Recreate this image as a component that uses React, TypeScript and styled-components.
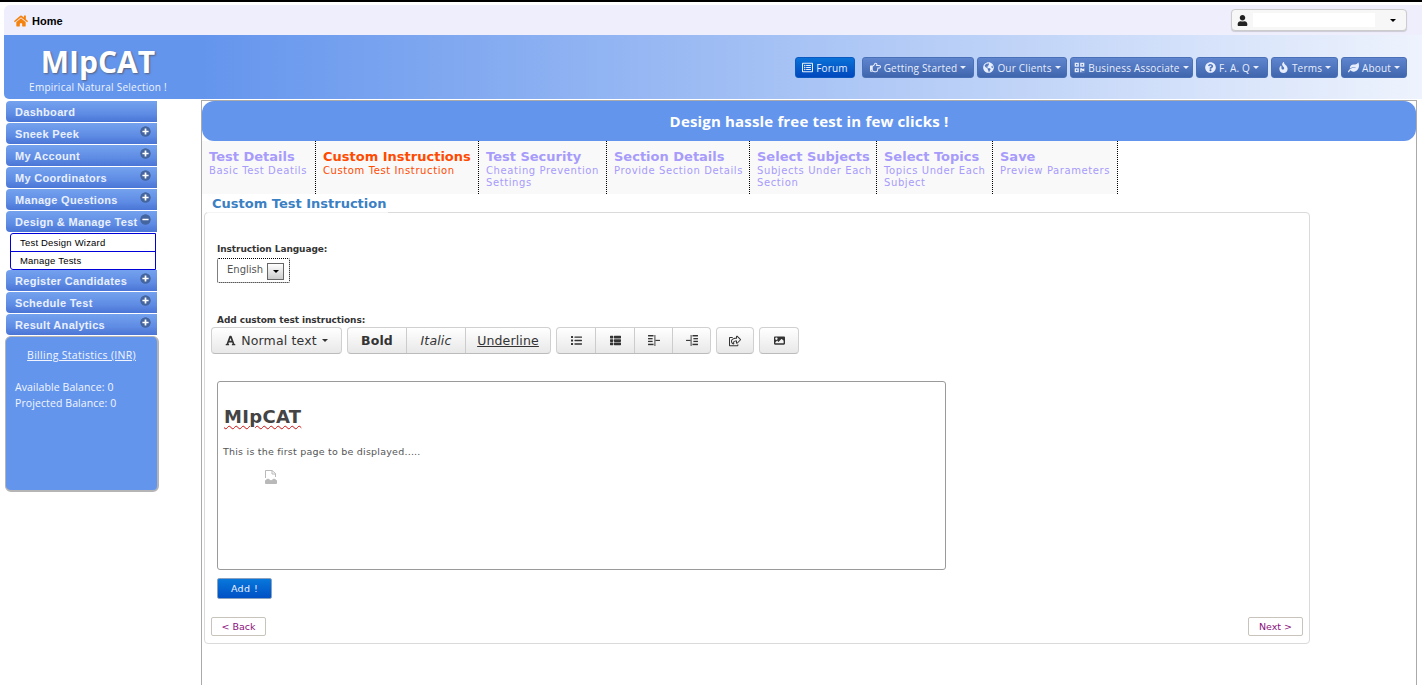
import React from 'react';
import styled, { createGlobalStyle, css } from 'styled-components';
import {
  FaHome, FaUser, FaRegListAlt, FaRegHandPointRight, FaGlobeAmericas, FaQrcode,
  FaQuestionCircle, FaFire, FaLeaf, FaFont, FaList, FaThList, FaRegShareSquare, FaImage,
  FaPlusCircle, FaMinusCircle,
} from 'react-icons/fa';

const GlobalStyle = createGlobalStyle`
  html, body { margin: 0; padding: 0; height: 100%; overflow: hidden; background: #fff; }
  body { font-family: "DejaVu Sans", Verdana, sans-serif; }
  * { box-sizing: border-box; }
`;

const TREBUCHET = `"Open Sans", "DejaVu Sans", sans-serif`;
const VERDANA = `"DejaVu Sans", Verdana, sans-serif`;

const Page = styled.div`
  height: 685px;
  border-top: 2px solid #000;
  overflow: hidden;
`;

// TOP BAR
const TopBar = styled.div`
  margin: 3px 0 0 4px;
  height: 30px;
  background: #eeeefc;
  border-top-left-radius: 6px;
  display: flex;
  align-items: center;
  justify-content: space-between;
  padding: 0 15px 0 10px;
`;

const HomeLink = styled.a`
  display: flex;
  align-items: center;
  gap: 4px;
  margin-top: 1px;
  font: bold 11px "Liberation Sans", Arial, sans-serif;
  color: #000;
  svg { color: #f5820d; }
`;

const UserSelect = styled.div`
  width: 176px;
  height: 22px;
  border: 1px solid #ccc;
  border-radius: 4px;
  background: #f7f7f7;
  box-shadow: 0 1px 1px rgba(0, 0, 0, 0.15);
  display: flex;
  align-items: center;
  padding-left: 5px;
  font-size: 12px;
  color: #222;
`;

const UserBlank = styled.div`
  width: 122px;
  height: 14px;
  margin-left: 5px;
  background: #fff;
  flex: none;
`;

const Caret = styled.span<{ $color?: string }>`
  display: inline-block;
  width: 0;
  height: 0;
  border-left: 3px solid transparent;
  border-right: 3px solid transparent;
  border-top: 3px solid ${(p) => p.$color || '#000'};
  flex: none;
`;

const UserCaret = styled(Caret)`
  margin-left: auto;
  margin-right: 10px;
`;

// HEADER
const Header = styled.div`
  margin-left: 4px;
  height: 64px;
  background: linear-gradient(to right, #6495ed 0%, #6495ed 14%, #eef3fd 100%);
  border-bottom-left-radius: 5px;
  display: flex;
  align-items: center;
  justify-content: space-between;
  padding: 0 15px 0 24px;
`;

const Brand = styled.div`
  width: 140px;
  color: #fff;
  text-align: center;
  font-family: ${TREBUCHET};
`;

const Logo = styled.div`
  font-size: 30px;
  font-weight: 700;
  line-height: 32px;
  margin-top: 5px;
  text-shadow: 1px 1px 2px #55617d;
`;

const Tagline = styled.div`
  font-size: 10px;
  line-height: 14px;
  margin-top: 2px;
  letter-spacing: 0.25px;
  white-space: nowrap;
  color: #eef3ff;
`;

const Nav = styled.div`
  display: flex;
  gap: 3px;
  margin-top: 1px;
`;

const NavButton = styled.a<{ $w: number; $primary?: boolean }>`
  width: ${(p) => p.$w}px;
  height: 21px;
  border-radius: 3px;
  display: flex;
  align-items: center;
  justify-content: center;
  gap: 3px;
  font: 10px ${TREBUCHET};
  letter-spacing: 0.2px;
  white-space: nowrap;
  color: #e8eefc;
  background: linear-gradient(#5f85cf, #3f66ad);
  border: 1px solid #4a70b8;
  ${(p) =>
    p.$primary &&
    css`
      margin-right: 4px;
      background: linear-gradient(#0a72d8, #0047bd);
      border-color: #0a5ac2;
    `}
  svg { flex: none; }
`;

// BODY
const Columns = styled.div`
  display: flex;
  align-items: flex-start;
`;

const Sidebar = styled.div`
  width: 200px;
  padding: 2px 0 0 6px;
  flex: none;
`;

const MenuItem = styled.div`
  width: 151px;
  height: 21px;
  margin-bottom: 1px;
  padding-left: 9px;
  display: flex;
  align-items: center;
  justify-content: space-between;
  border-radius: 4px 0 0 4px;
  background: linear-gradient(#74a2ee 0%, #5f8ce4 60%, #4a75d6 100%);
  font: bold 11px "Liberation Sans", Arial, sans-serif;
  letter-spacing: 0.3px;
  color: #e9f0ff;
  white-space: nowrap;
  svg {
    color: #45659f;
    background: radial-gradient(#fff 55%, transparent 58%);
    border-radius: 50%;
    margin: -5px 6px 0 0;
    flex: none;
  }
`;

const SubMenu = styled.div`
  width: 146px;
  margin-left: 4px;
  border: 1px solid #0000d8;
  border-radius: 3px 0 0 3px;
  background: #fff;
`;

const SubItem = styled.div<{ $last?: boolean }>`
  height: ${(p) => (p.$last ? 17 : 18)}px;
  padding-left: 9px;
  display: flex;
  align-items: center;
  font: 9.5px "Liberation Sans", Arial, sans-serif;
  letter-spacing: 0.2px;
  color: #000;
  ${(p) => !p.$last && 'border-bottom: 1px solid #0000d8;'}
`;

const Billing = styled.div`
  width: 154px;
  height: 156px;
  margin: 0 0 0 -1px;
  padding: 10px 9px;
  border: 1px solid #b5b5b5;
  border-bottom-width: 2px;
  border-right-width: 2px;
  border-radius: 6px;
  background: #6495ed;
  color: #f2f5ff;
  font: 10.5px/16px ${TREBUCHET};
`;

const BillingTitle = styled.div`
  text-align: center;
  text-decoration: underline;
  letter-spacing: 0.3px;
  margin-bottom: 16px;
`;

const BalanceRow = styled.div`
  letter-spacing: 0.1px;
`;

// MAIN PANEL
const Main = styled.div`
  width: 1216px;
  height: 590px;
  flex: none;
  border-left: 1px solid #aaa;
  border-right: 1px solid #aaa;
  border-top: 1px solid #aaa;
  margin: 1px 0 0 1px;
`;

const Banner = styled.div`
  height: 40px;
  border-radius: 12px;
  background: #6495ed;
  color: #fff;
  display: flex;
  align-items: center;
  justify-content: center;
  font: bold 15px ${TREBUCHET};
  letter-spacing: 0.17px;
`;

const Tabs = styled.div`
  display: flex;
  height: 53px;
`;

const Tab = styled.div<{ $w: number; $active?: boolean }>`
  width: ${(p) => p.$w}px;
  flex: none;
  padding: 8px 2px 0 7px;
  background: #f9f9f9;
  border-right: 1px dotted #000;
  color: ${(p) => (p.$active ? '#ff4a00' : '#a79bfb')};
`;

const TabTitle = styled.div`
  font: bold 13px/16px ${VERDANA};
  white-space: nowrap;
`;

const TabSub = styled.div`
  font: 10px/12px ${VERDANA};
  letter-spacing: 0.6px;
`;

const Fieldset = styled.div`
  position: relative;
  width: 1106px;
  height: 432px;
  margin: 18px 0 0 2px;
  padding: 30px 6px 0 6px;
  border: 1px solid #dadada;
  border-radius: 4px;
`;

const Legend = styled.div`
  position: absolute;
  top: -19px;
  left: 2px;
  padding: 0 2px 0 5px;
  height: 19px;
  background: rgba(255, 255, 255, 0.7);
  font: bold 13px/20px ${VERDANA};
  color: #3c80c4;
`;

const FieldLabel = styled.div`
  margin-left: 6px;
  font: bold 9px/12px ${VERDANA};
  letter-spacing: -0.08px;
  color: #333;
`;

const LangSelect = styled.div`
  width: 73px;
  height: 25px;
  margin: 3px 0 0 6px;
  border: 1px dotted #000;
  border-radius: 2px;
  padding-left: 9px;
  display: flex;
  align-items: center;
  gap: 4px;
  font: 10px ${VERDANA};
  color: #555;
`;

const LangValue = styled.span`
  margin-top: -3px;
`;

const LangArrow = styled.div`
  width: 17px;
  height: 17px;
  margin-top: 1px;
  border: 1px solid #666;
  background: linear-gradient(#fff, #ccc);
  display: flex;
  align-items: center;
  justify-content: center;
`;

const InstructionsLabel = styled(FieldLabel)`
  margin-top: 31px;
`;

const Toolbar = styled.div`
  display: flex;
  gap: 5px;
  margin-top: 1px;
`;

const ButtonGroup = styled.div`
  display: flex;
  height: 27px;
  border: 1px solid #d0d0d0;
  border-bottom-color: #bbb;
  border-radius: 4px;
  background: linear-gradient(#fff, #e8e8e8);
`;

const ToolButton = styled.div<{ $w: number; $bold?: boolean; $italic?: boolean; $underline?: boolean }>`
  width: ${(p) => p.$w}px;
  display: flex;
  align-items: center;
  justify-content: center;
  gap: 5px;
  font-size: 12.5px;
  letter-spacing: 0.15px;
  color: #333;
  font-weight: ${(p) => (p.$bold ? 700 : 400)};
  font-style: ${(p) => (p.$italic ? 'italic' : 'normal')};
  text-decoration: ${(p) => (p.$underline ? 'underline' : 'none')};
  & + & { border-left: 1px solid #ccc; }
`;

const Editor = styled.div`
  width: 729px;
  height: 189px;
  margin: 27px 0 0 6px;
  border: 1px solid #9a9a9a;
  border-radius: 3px;
  padding: 24px 6px 0;
  color: #555;
`;

const EditorHeading = styled.div`
  font: bold 18px/22px ${VERDANA};
  letter-spacing: 0.3px;
  color: #444;
  text-decoration: underline wavy #d01010 1px;
  text-underline-offset: 2px;
  width: fit-content;
`;

const EditorText = styled.div`
  margin: 17px 0 0 -1px;
  font: 9.5px/14px ${VERDANA};
  letter-spacing: 0.22px;
`;

const BrokenImage = styled.div`
  margin: 11px 0 0 41px;
  line-height: 0;
  color: #b9b9b9;
`;

const AddButton = styled.div`
  width: 55px;
  height: 21px;
  margin: 8px 0 0 6px;
  border: 1px solid #8aa1c0;
  border-radius: 2px;
  background: linear-gradient(#0878dc, #0050c4);
  color: #eaf2ff;
  display: flex;
  align-items: center;
  justify-content: center;
  font: 9.5px ${VERDANA};
  letter-spacing: 0.4px;
`;

const Pager = styled.div`
  display: flex;
  justify-content: space-between;
  margin-top: 18px;
`;

const PagerButton = styled.div`
  width: 55px;
  height: 19px;
  border: 1px solid #c8c4bc;
  border-radius: 2px;
  display: flex;
  align-items: center;
  justify-content: center;
  font: 9.5px ${VERDANA};
  color: #8b0f7e;
`;

const IndentIcon = ({ flip }: { flip?: boolean }) => (
  <svg width="12" height="11" viewBox="0 0 13 12" fill="currentColor" style={flip ? { transform: 'scaleX(-1)' } : undefined}>
    <rect x="0" y="0" width="6" height="1.6" />
    <rect x="0" y="3.3" width="5" height="1.4" />
    <rect x="0" y="6.3" width="5" height="1.4" />
    <rect x="0" y="9.5" width="6" height="1.6" />
    <rect x="7" y="0" width="1" height="12" />
    <rect x="8" y="5.3" width="5" height="1.2" />
  </svg>
);

const menuTop = [
  { label: 'Dashboard' },
  { label: 'Sneek Peek', more: true },
  { label: 'My Account', more: true },
  { label: 'My Coordinators', more: true },
  { label: 'Manage Questions', more: true },
];

const menuBottom = ['Register Candidates', 'Schedule Test', 'Result Analytics'];

const tabs = [
  { w: 114, title: 'Test Details', sub: 'Basic Test Deatils' },
  { w: 163, title: 'Custom Instructions', sub: 'Custom Test Instruction', active: true },
  { w: 128, title: 'Test Security', sub: 'Cheating Prevention Settings' },
  { w: 143, title: 'Section Details', sub: 'Provide Section Details' },
  { w: 127, title: 'Select Subjects', sub: 'Subjects Under Each Section' },
  { w: 116, title: 'Select Topics', sub: 'Topics Under Each Subject' },
  { w: 125, title: 'Save', sub: 'Preview Parameters' },
];

const App = () => {
  return (
    <>
      <GlobalStyle />
      <Page>
        <TopBar>
          <HomeLink>
            <FaHome size={14} />
            Home
          </HomeLink>
          <UserSelect>
            <FaUser size={11} />
            <UserBlank />
            <UserCaret />
          </UserSelect>
        </TopBar>

        <Header>
          <Brand>
            <Logo>MIpCAT</Logo>
            <Tagline>Empirical Natural Selection !</Tagline>
          </Brand>
          <Nav>
            <NavButton $w={60} $primary>
              <FaRegListAlt size={11} /> Forum
            </NavButton>
            <NavButton $w={112}>
              <FaRegHandPointRight size={11} /> Getting Started <Caret $color="#e8eefc" />
            </NavButton>
            <NavButton $w={90}>
              <FaGlobeAmericas size={11} /> Our Clients <Caret $color="#e8eefc" />
            </NavButton>
            <NavButton $w={123}>
              <FaQrcode size={11} /> Business Associate <Caret $color="#e8eefc" />
            </NavButton>
            <NavButton $w={72}>
              <FaQuestionCircle size={11} /> F. A. Q <Caret $color="#e8eefc" />
            </NavButton>
            <NavButton $w={67}>
              <FaFire size={11} /> Terms <Caret $color="#e8eefc" />
            </NavButton>
            <NavButton $w={66}>
              <FaLeaf size={11} /> About <Caret $color="#e8eefc" />
            </NavButton>
          </Nav>
        </Header>

        <Columns>
          <Sidebar>
            {menuTop.map((item) => (
              <MenuItem key={item.label}>
                {item.label}
                {item.more && <FaPlusCircle size={11} />}
              </MenuItem>
            ))}
            <MenuItem>
              Design &amp; Manage Test
              <FaMinusCircle size={11} />
            </MenuItem>
            <SubMenu>
              <SubItem>Test Design Wizard</SubItem>
              <SubItem $last>Manage Tests</SubItem>
            </SubMenu>
            {menuBottom.map((label) => (
              <MenuItem key={label}>
                {label}
                <FaPlusCircle size={11} />
              </MenuItem>
            ))}
            <Billing>
              <BillingTitle>Billing Statistics (INR)</BillingTitle>
              <BalanceRow>Available Balance: 0</BalanceRow>
              <BalanceRow>Projected Balance: 0</BalanceRow>
            </Billing>
          </Sidebar>

          <Main>
            <Banner>Design hassle free test in few clicks !</Banner>
            <Tabs>
              {tabs.map((tab) => (
                <Tab key={tab.title} $w={tab.w} $active={tab.active}>
                  <TabTitle>{tab.title}</TabTitle>
                  <TabSub>{tab.sub}</TabSub>
                </Tab>
              ))}
            </Tabs>

            <Fieldset>
              <Legend>Custom Test Instruction</Legend>
              <FieldLabel>Instruction Language:</FieldLabel>
              <LangSelect>
                <LangValue>English</LangValue>
                <LangArrow>
                  <Caret />
                </LangArrow>
              </LangSelect>

              <InstructionsLabel>Add custom test instructions:</InstructionsLabel>
              <Toolbar>
                <ButtonGroup>
                  <ToolButton $w={129}>
                    <FaFont size={11} /> Normal text <Caret $color="#333" />
                  </ToolButton>
                </ButtonGroup>
                <ButtonGroup>
                  <ToolButton $w={58} $bold>Bold</ToolButton>
                  <ToolButton $w={59} $italic>Italic</ToolButton>
                  <ToolButton $w={85} $underline>Underline</ToolButton>
                </ButtonGroup>
                <ButtonGroup>
                  <ToolButton $w={38}><FaList size={11} /></ToolButton>
                  <ToolButton $w={39}><FaThList size={11} /></ToolButton>
                  <ToolButton $w={38}><IndentIcon /></ToolButton>
                  <ToolButton $w={38}><IndentIcon flip /></ToolButton>
                </ButtonGroup>
                <ButtonGroup>
                  <ToolButton $w={36}><FaRegShareSquare size={12} /></ToolButton>
                </ButtonGroup>
                <ButtonGroup>
                  <ToolButton $w={38}><FaImage size={11} /></ToolButton>
                </ButtonGroup>
              </Toolbar>

              <Editor>
                <EditorHeading>MIpCAT</EditorHeading>
                <EditorText>This is the first page to be displayed.....</EditorText>
                <BrokenImage>
                  <svg width="12" height="14" viewBox="0 0 12 14" fill="none" stroke="currentColor">
                    <path d="M0.5 8V0.5H7L10.5 3.5V7" />
                    <path d="M7 0.5V4H10.5" />
                    <path d="M0.5 10.5L3 9L6 11L9 9L11.5 10.5V13.5H0.5Z" fill="currentColor" />
                  </svg>
                </BrokenImage>
              </Editor>

              <AddButton>Add !</AddButton>
              <Pager>
                <PagerButton>&lt; Back</PagerButton>
                <PagerButton>Next &gt;</PagerButton>
              </Pager>
            </Fieldset>
          </Main>
        </Columns>
      </Page>
    </>
  );
};

export default App;
